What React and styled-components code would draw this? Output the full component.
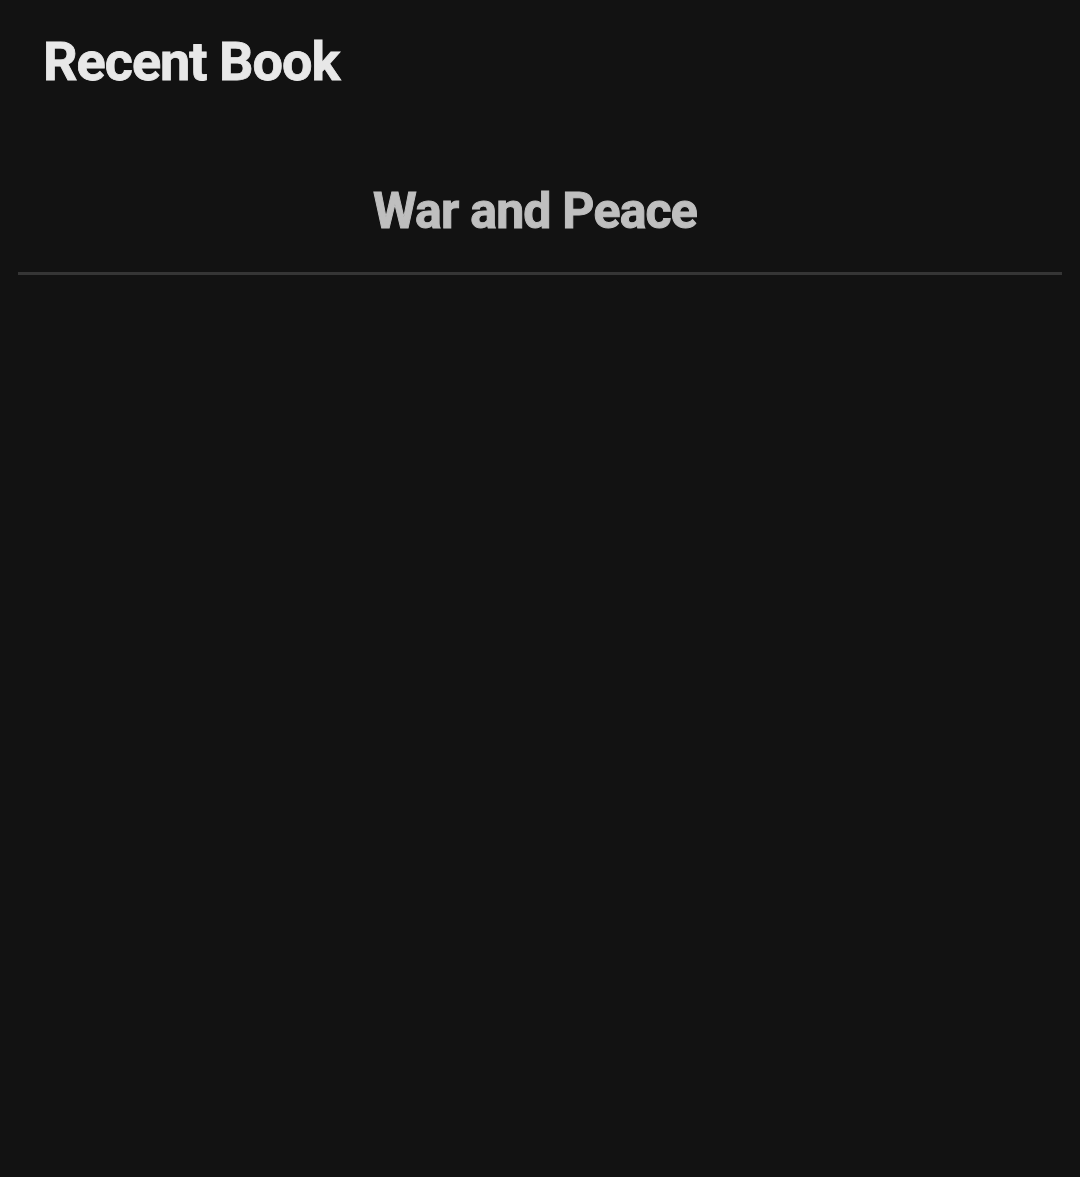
import React from 'react';
import styled, { createGlobalStyle } from 'styled-components';

const GlobalStyle = createGlobalStyle`
  html, body {
    margin: 0;
    padding: 0;
    background: #121212;
  }
  body {
    font-family: Roboto, "Noto Sans", sans-serif;
  }
`;

const Screen = styled.div`
  min-height: 1177px;
  background: #121212;
  padding: 0 18px;
  box-sizing: border-box;
`;

const Title = styled.h1`
  margin: 0;
  padding: 26px 0 0 25px;
  color: #e8e8e8;
  font-size: 54px;
  font-weight: 700;
  line-height: 72px;
  letter-spacing: -1px;
  -webkit-text-stroke: 0.8px #e8e8e8;
`;

const BookItem = styled.div`
  margin-top: 83px;
  padding-bottom: 31px;
  border-bottom: 3px solid #353535;
  text-align: center;
`;

const BookTitle = styled.h2`
  margin: 0;
  padding-right: 10px;
  color: #bfbfbf;
  font-size: 50px;
  font-weight: 700;
  line-height: 60px;
  letter-spacing: -0.8px;
  -webkit-text-stroke: 1px #bfbfbf;
`;

export default function App() {
  return (
    <>
      <GlobalStyle />
      <Screen>
        <Title>Recent Book</Title>
        <BookItem>
          <BookTitle>War and Peace</BookTitle>
        </BookItem>
      </Screen>
    </>
  );
}
